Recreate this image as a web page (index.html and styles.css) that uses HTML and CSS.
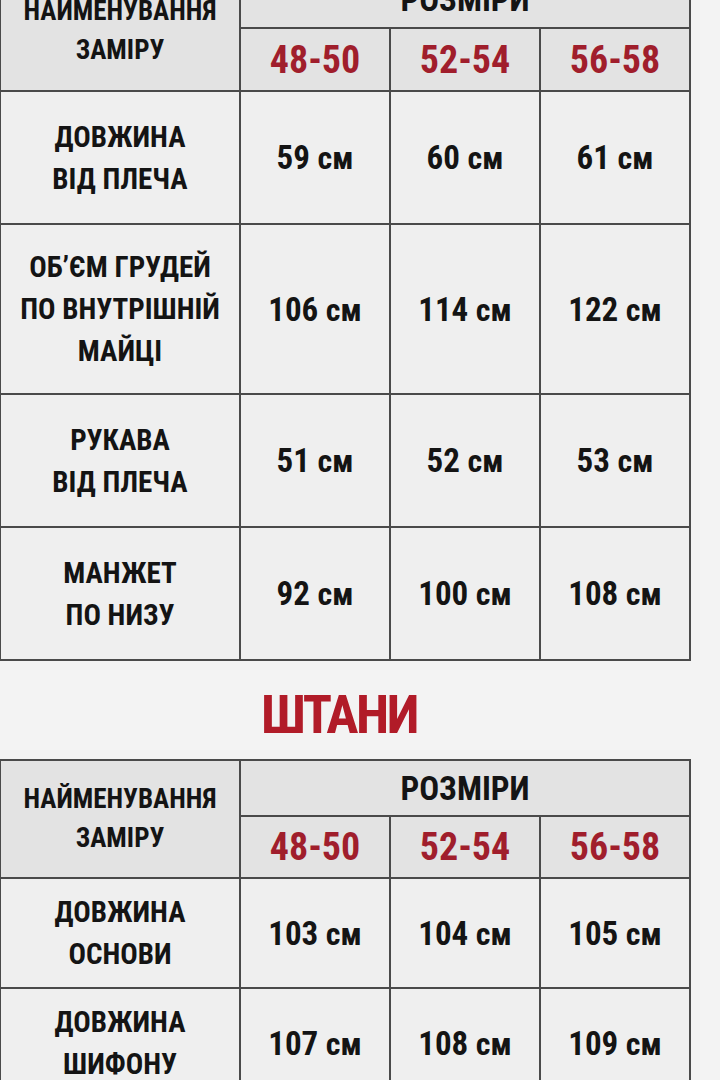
FILE: index.html
```html
<!DOCTYPE html>
<html lang="uk">
<head>
<meta charset="utf-8">
<title>Розмірна сітка</title>
<link rel="stylesheet" href="styles.css">
</head>
<body>
<main class="page">
  <table class="chart chart--top">
    <colgroup><col class="col-name"><col class="col-size"><col class="col-size"><col class="col-size"></colgroup>
    <thead>
      <tr class="row-head">
        <th rowspan="2" class="name-head">НАЙМЕНУВАННЯ<br>ЗАМІРУ</th>
        <th colspan="3" class="sizes-head">РОЗМІРИ</th>
      </tr>
      <tr class="row-sizes">
        <th class="size">48-50</th>
        <th class="size">52-54</th>
        <th class="size">56-58</th>
      </tr>
    </thead>
    <tbody>
      <tr class="row-2l">
        <th class="label">ДОВЖИНА<br>ВІД ПЛЕЧА</th>
        <td class="val">59 <span class="unit">см</span></td>
        <td class="val">60 <span class="unit">см</span></td>
        <td class="val">61 <span class="unit">см</span></td>
      </tr>
      <tr class="row-3l">
        <th class="label">ОБ’ЄМ ГРУДЕЙ<br>ПО ВНУТРІШНІЙ<br>МАЙЦІ</th>
        <td class="val">106 <span class="unit">см</span></td>
        <td class="val">114 <span class="unit">см</span></td>
        <td class="val">122 <span class="unit">см</span></td>
      </tr>
      <tr class="row-2l">
        <th class="label">РУКАВА<br>ВІД ПЛЕЧА</th>
        <td class="val">51 <span class="unit">см</span></td>
        <td class="val">52 <span class="unit">см</span></td>
        <td class="val">53 <span class="unit">см</span></td>
      </tr>
      <tr class="row-2l">
        <th class="label">МАНЖЕТ<br>ПО НИЗУ</th>
        <td class="val">92 <span class="unit">см</span></td>
        <td class="val">100 <span class="unit">см</span></td>
        <td class="val">108 <span class="unit">см</span></td>
      </tr>
    </tbody>
  </table>

  <h2 class="section-title">ШТАНИ</h2>

  <table class="chart chart--bottom">
    <colgroup><col class="col-name"><col class="col-size"><col class="col-size"><col class="col-size"></colgroup>
    <thead>
      <tr class="row-head">
        <th rowspan="2" class="name-head">НАЙМЕНУВАННЯ<br>ЗАМІРУ</th>
        <th colspan="3" class="sizes-head">РОЗМІРИ</th>
      </tr>
      <tr class="row-sizes">
        <th class="size">48-50</th>
        <th class="size">52-54</th>
        <th class="size">56-58</th>
      </tr>
    </thead>
    <tbody>
      <tr class="row-short">
        <th class="label">ДОВЖИНА<br>ОСНОВИ</th>
        <td class="val">103 <span class="unit">см</span></td>
        <td class="val">104 <span class="unit">см</span></td>
        <td class="val">105 <span class="unit">см</span></td>
      </tr>
      <tr class="row-short">
        <th class="label">ДОВЖИНА<br>ШИФОНУ</th>
        <td class="val">107 <span class="unit">см</span></td>
        <td class="val">108 <span class="unit">см</span></td>
        <td class="val">109 <span class="unit">см</span></td>
      </tr>
    </tbody>
  </table>
</main>
</body>
</html>
```

FILE: styles.css
```css
html, body {
  margin: 0;
  padding: 0;
  background: #f3f3f3;
}

body {
  width: 720px;
  height: 1080px;
  overflow: hidden;
  font-family: "Roboto Condensed", "DejaVu Sans Condensed", "Liberation Sans", sans-serif;
  color: #141414;
}

.page {
  display: flex;
  flex-direction: column;
}

.chart {
  border-collapse: collapse;
  table-layout: fixed;
  width: 691px;
  margin-left: -1px;
}

.col-name { width: 240px; }
.col-size { width: 150px; }

.chart th,
.chart td {
  border: 2px solid #4a4a4a;
  padding: 0;
  text-align: center;
  vertical-align: middle;
  font-weight: 700;
  white-space: nowrap;
}

.chart--top {
  margin-top: -30px;
}

.row-head { height: 57px; }
.row-sizes { height: 63px; }
.row-2l { height: 133px; }
.row-3l { height: 170px; }
.row-short { height: 110px; }

.chart--bottom .row-head { height: 56px; }
.chart--bottom .row-sizes { height: 62px; }

.name-head {
  background: #e3e3e3;
  font-size: 27px;
  line-height: 39px;
  padding-bottom: 4px;
}

.sizes-head {
  background: #e3e3e3;
  font-size: 33px;
  padding: 4px 16px 0 0;
}

.size {
  background: #e3e3e3;
  color: #a01e2c;
  font-size: 38px;
  padding-top: 6px;
}

.label {
  background: #efefef;
  font-size: 29px;
  line-height: 42px;
}

.val {
  background: #efefef;
  font-size: 33px;
}

.unit {
  font-size: 32px;
}

.section-title {
  margin: 0;
  width: 678px;
  height: 98px;
  text-align: center;
  font-size: 54px;
  letter-spacing: -2.5px;
  line-height: 108px;
  font-weight: 700;
  color: #b11b28;
}
```
